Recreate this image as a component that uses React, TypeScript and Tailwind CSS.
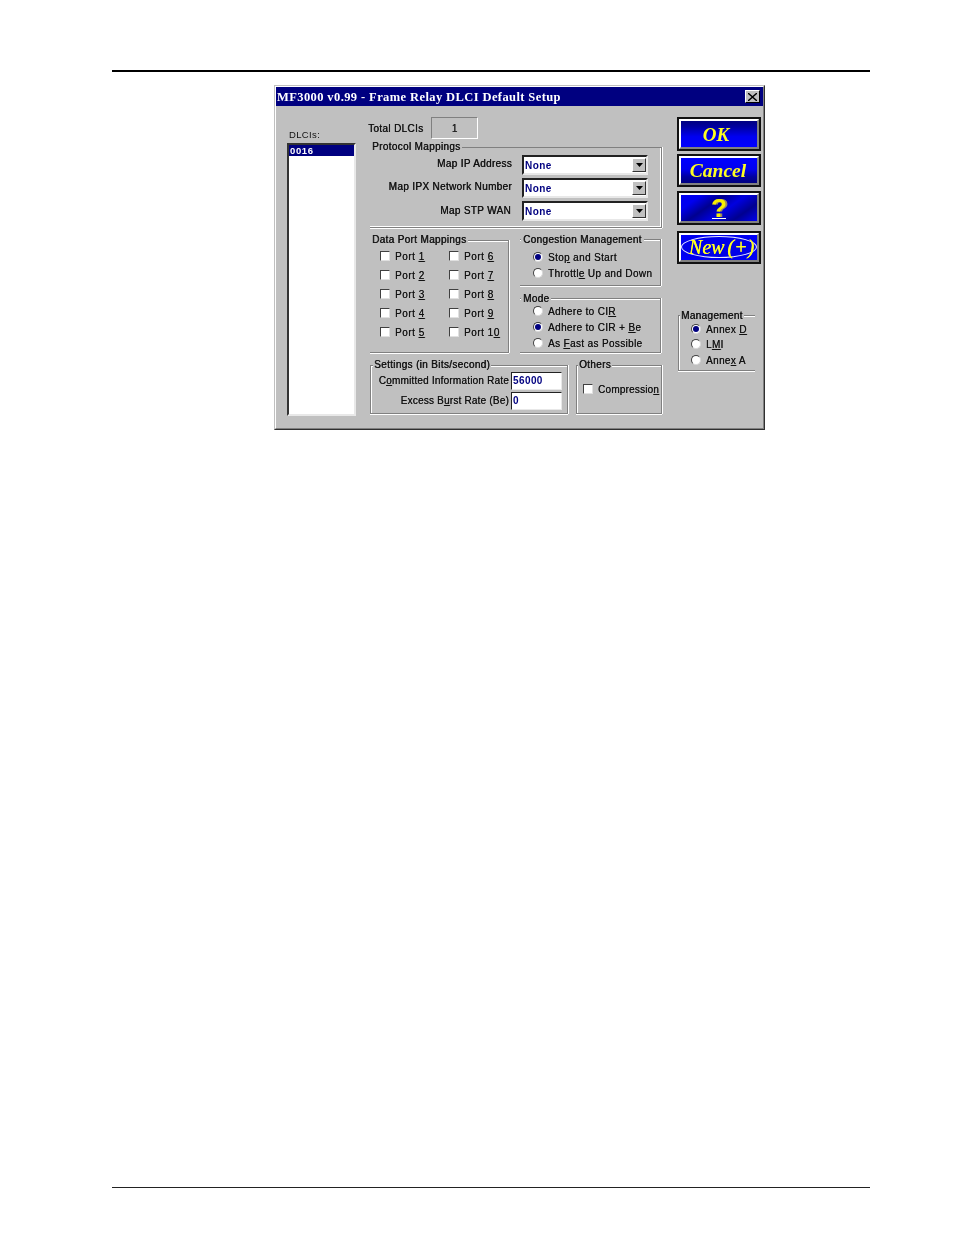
import React from "react";

const ui = "font-['Liberation_Sans',Arial,sans-serif]";
const heavy = "text-[10px] tracking-[0.33px] text-[#111] [text-shadow:0.4px_0_0_#222] whitespace-nowrap";

function Group({ title, className, legend, children }: { title: React.ReactNode; className: string; legend?: string; children?: React.ReactNode }) {
  return (
    <div className={`relative border-[#808080] ${className}`}>
      <span className={`absolute bg-[#c0c0c0] leading-[12px] ${heavy} ${legend ?? "left-[2px] -top-[6px] px-[1px]"}`}>{title}</span>
      {children}
    </div>
  );
}

function Check({ label, track }: { label: React.ReactNode; track: string }) {
  return (
    <div className="flex items-center gap-[5px] h-[11px]">
      <span className="w-[10px] h-[10px] bg-white border border-t-[#404040] border-l-[#404040] border-r-[#e0e0e0] border-b-[#e0e0e0] shrink-0" />
      <span className={`text-[10px] ${track} leading-[11px] mt-[1px] text-[#111] [text-shadow:0.2px_0_0_#333] whitespace-nowrap`}>{label}</span>
    </div>
  );
}

function Radio({ label, on }: { label: React.ReactNode; on?: boolean }) {
  return (
    <div className="flex items-center gap-[5px] h-[11px]">
      <span className="w-[10px] h-[10px] rounded-full bg-white border border-t-[#404040] border-l-[#404040] border-r-[#d8d8d8] border-b-[#d8d8d8] flex items-center justify-center shrink-0">
        {on && <span className="w-[6px] h-[6px] rounded-full bg-[#000080]" />}
      </span>
      <span className="text-[10px] tracking-[0.35px] leading-[11px] mt-[1px] text-[#111] [text-shadow:0.2px_0_0_#333] whitespace-nowrap">{label}</span>
    </div>
  );
}

function Combo() {
  return (
    <div className="flex items-center w-[126px] h-[20px] bg-white border-2 border-t-[#222] border-l-[#222] border-r-[#e8e8e8] border-b-[#e8e8e8]">
      <span className="flex-1 pl-[1px] pt-[1px] text-[10px] font-bold tracking-[0.45px] text-[#000080] leading-none">None</span>
      <span className="w-[14px] h-[14px] bg-[#c0c0c0] border border-t-white border-l-white border-r-[#333] border-b-[#333] flex items-center justify-center">
        <svg width="7" height="4" viewBox="0 0 7 4"><path d="M0 0h7L3.5 4z" fill="#000" /></svg>
      </span>
    </div>
  );
}

function Btn({ h, mt, face, children }: { h: string; mt?: string; face: string; children: React.ReactNode }) {
  return (
    <div className={`relative w-[84px] ${h} ${mt ?? ""} bg-[#111] p-[2px]`}>
      <div className={`w-full h-full border-2 border-t-white border-l-white border-r-[#808080] border-b-[#808080] flex items-center justify-center overflow-hidden relative ${face}`}>
        {children}
      </div>
    </div>
  );
}

const btnText = "font-['Liberation_Serif',serif] italic font-bold text-[#ffff20]";

export default function App() {
  return (
    <div className={`w-[954px] h-[1235px] bg-white flex flex-col ${ui}`}>
      <div className="mt-[70px] ml-[112px] w-[758px] h-[2px] bg-black" />
      <div className="mt-[13px] ml-[274px] w-[491px] h-[345px] border border-t-[#c0c0c0] border-l-[#c0c0c0] border-r-[#303030] border-b-[#303030] blur-[0.3px]">
        <div className="w-full h-full border border-t-white border-l-white border-r-[#808080] border-b-[#808080] bg-[#c0c0c0] flex flex-col">
          <div className="h-[19px] bg-[#000080] flex items-center pl-[1px] pr-[3px] shrink-0">
            <span className="flex-1 pt-[1px] font-['Liberation_Serif',serif] font-bold text-[12.5px] tracking-[0.4px] text-white whitespace-nowrap">MF3000 v0.99 - Frame Relay DLCI Default Setup</span>
            <span className="w-[15px] h-[13px] bg-[#c0c0c0] border border-t-white border-l-white border-r-black border-b-black flex items-center justify-center">
              <svg width="9" height="8" viewBox="0 0 9 8"><path d="M1 0l3.5 3L8 0h1v1L5.5 4 9 7v1H8L4.5 5 1 8H0V7l3.5-3L0 1V0z" fill="#000" /></svg>
            </span>
          </div>
          <div className="flex flex-1">
            <div className="ml-[11px] w-[69px] pt-[23px] flex flex-col shrink-0">
              <span className="pl-[2px] h-[14px] text-[9.5px] leading-[12px] tracking-[0.35px] text-[#111]">DLCIs:</span>
              <div className="w-[69px] h-[273px] bg-white border-2 border-t-[#333] border-l-[#333] border-r-[#e8e8e8] border-b-[#e8e8e8]">
                <div className="h-[11px] bg-[#000080] text-white text-[9.5px] font-bold leading-[11px] tracking-[0.6px] pl-[1px]">0016</div>
              </div>
            </div>

            <div className="ml-[14px] w-[292px] pt-[11px] flex flex-col shrink-0">
              <div className="flex items-center h-[22px] -ml-[2px]">
                <span className={`w-[63px] pt-[1px] ${heavy}`}>Total DLCIs</span>
                <span className="w-[47px] h-[22px] border border-t-[#808080] border-l-[#808080] border-r-white border-b-white flex items-center justify-center text-[10px] text-[#222] [text-shadow:0.4px_0_0_#222]">1</span>
              </div>
              <Group title="Protocol Mappings" className="mt-[8px] h-[81px] border-t border-b border-r shadow-[inset_-1px_-1px_0_#fff,0_1px_0_#fff,1px_0_0_#fff]" legend="left-[0px] -top-[7px] px-[2px]">
                <div className="flex flex-col items-end pr-[13px] pt-[7px]">
                  <div className="flex items-center gap-[10px]"><span className={`${heavy} -mt-[3px]`}>Map IP Address</span><Combo /></div>
                  <div className="flex items-center gap-[10px] mt-[3px]"><span className={`${heavy} -mt-[4px]`}>Map IPX Network Number</span><Combo /></div>
                  <div className="flex items-center gap-[11px] mt-[3px]"><span className={`${heavy} -mt-[2px]`}>Map STP WAN</span><Combo /></div>
                </div>
              </Group>
              <div className="flex mt-[12px]">
                <Group title="Data Port Mappings" className="w-[139px] h-[113px] border-t border-b border-r shadow-[0_1px_0_#fff,1px_0_0_#fff,inset_0_1px_0_#fff]" legend="left-[0px] -top-[7px] px-[2px]">
                  <div className="grid grid-cols-[69px_1fr] gap-y-[8px] pl-[10px] pt-[9px]">
                    {[[1, 6], [2, 7], [3, 8], [4, 9]].map(([a, b]) => (
                      <React.Fragment key={a}>
                        <Check track="tracking-[0.5px]" label={<>Port <u>{a}</u></>} />
                        <Check track="tracking-[0.5px]" label={<>Port <u>{b}</u></>} />
                      </React.Fragment>
                    ))}
                    <Check track="tracking-[0.5px]" label={<>Port <u>5</u></>} />
                    <Check track="tracking-[0.5px]" label={<>Port 1<u>0</u></>} />
                  </div>
                </Group>
                <div className="ml-[11px] w-[141px] flex flex-col">
                  <Group title="Congestion Management" className="h-[47px] border-t border-b border-r -mt-[1px] shadow-[0_1px_0_#fff,1px_0_0_#fff,inset_0_1px_0_#fff]" legend="left-[1px] -top-[6px] px-[2px]">
                    <div className="flex flex-col gap-[5px] pl-[13px] pt-[11px]">
                      <Radio on label={<>Sto<u>p</u> and Start</>} />
                      <Radio label={<>Throttl<u>e</u> Up and Down</>} />
                    </div>
                  </Group>
                  <Group title="Mode" className="mt-[12px] h-[55px] border-t border-b border-r shadow-[0_1px_0_#fff,1px_0_0_#fff,inset_0_1px_0_#fff]" legend="left-[1px] -top-[6px] px-[2px]">
                    <div className="flex flex-col gap-[5px] pl-[13px] pt-[6px]">
                      <Radio label={<>Adhere to CI<u>R</u></>} />
                      <Radio on label={<>Adhere to CIR + <u>B</u>e</>} />
                      <Radio label={<>As <u>F</u>ast as Possible</>} />
                    </div>
                  </Group>
                </div>
              </div>
              <div className="flex mt-[12px]">
                <Group title="Settings (in Bits/second)" className="w-[198px] h-[49px] border shadow-[0_1px_0_#fff,1px_0_0_#fff,inset_1px_1px_0_#fff]" legend="left-[2px] -top-[7px] px-[1px]">
                  <div className="flex flex-col items-end pr-[5px] pt-[6px]">
                    <div className="flex items-center gap-[2px]"><span className="text-[10px] tracking-[0.2px] text-[#111] [text-shadow:0.2px_0_0_#333] whitespace-nowrap -mt-[1px]">C<u>o</u>mmitted Information Rate</span><span className="w-[51px] h-[18px] bg-white border border-t-[#222] border-l-[#222] border-r-[#e8e8e8] border-b-[#e8e8e8] text-[10px] font-bold tracking-[0.4px] text-[#000080] leading-[16px] pl-[1px]">56000</span></div>
                    <div className="flex items-center gap-[2px] mt-[2px]"><span className="text-[10px] tracking-[0.2px] text-[#111] [text-shadow:0.2px_0_0_#333] whitespace-nowrap -mt-[1px]">Excess B<u>u</u>rst Rate (Be)</span><span className="w-[51px] h-[18px] bg-white border border-t-[#222] border-l-[#222] border-r-[#e8e8e8] border-b-[#e8e8e8] text-[10px] font-bold text-[#000080] leading-[16px] pl-[1px]">0</span></div>
                  </div>
                </Group>
                <Group title="Others" className="ml-[8px] w-[86px] h-[49px] border shadow-[0_1px_0_#fff,1px_0_0_#fff,inset_1px_1px_0_#fff]" legend="left-[1px] -top-[7px] px-[1px]">
                  <div className="pl-[6px] pt-[17px]"><Check track="tracking-[0.2px]" label={<>Compressio<u>n</u></>} /></div>
                </Group>
              </div>
            </div>

            <div className="ml-[15px] w-[84px] pt-[11px] flex flex-col shrink-0">
              <Btn h="h-[34px]" face="bg-[linear-gradient(180deg,#000080_0%,#0000a0_22%,#0000f0_60%,#0000ff_100%)]">
                <span className={`${btnText} text-[19px] -ml-[6px] leading-none`}>OK</span>
              </Btn>
              <Btn h="h-[33px]" mt="mt-[3px]" face="bg-[linear-gradient(180deg,#0000ff_0%,#0000f0_45%,#0000a0_75%,#000080_100%)]">
                <span className={`${btnText} text-[19.5px] -ml-[2px] leading-none`}>Cancel</span>
              </Btn>
              <Btn h="h-[34px]" mt="mt-[4px]" face="bg-[linear-gradient(145deg,#0000f0_0%,#0000f0_18%,#000090_38%,#0000e0_58%,#000090_78%,#0000f0_100%)]">
                <span className="relative font-['Liberation_Sans',sans-serif] font-bold text-[26px] leading-none text-[#f8f000] [text-shadow:2px_0_0_#9a8a60] -mt-[1px]">?</span>
                <span className="absolute left-[31px] bottom-[2px] w-[14px] h-[1px] bg-white" />
              </Btn>
              <Btn h="h-[33px]" mt="mt-[6px]" face="bg-[radial-gradient(ellipse_at_center,#0000e8_0%,#0000e8_60%,#0000ff_100%)]">
                <span className="font-['Liberation_Serif',serif] italic text-[#ffff20] [text-shadow:0.3px_0_0_#ffff20] text-[20px] [word-spacing:-2px] leading-none border-[1.5px] border-[#e8e8ff] rounded-[50%] w-[76px] h-[22px] -mt-[2px] pl-[5px] flex items-center justify-center whitespace-nowrap">New (+)</span>
              </Btn>
              <Group title="Management" className="mt-[51px] w-[77px] h-[56px] ml-[1px] border-t border-b border-l shadow-[0_1px_0_#fff,inset_1px_1px_0_#fff]" legend="left-[1px] -top-[6px] px-[1px]">
                <div className="flex flex-col pl-[12px] pt-[7px]">
                  <Radio on label={<>Annex <u>D</u></>} />
                  <div className="mt-[4px]"><Radio label={<>L<u>M</u>I</>} /></div>
                  <div className="mt-[5px]"><Radio label={<>Anne<u>x</u> A</>} /></div>
                </div>
              </Group>
            </div>
          </div>
        </div>
      </div>
      <div className="mt-[757px] ml-[112px] w-[758px] h-[1px] bg-[#222]" />
    </div>
  );
}
